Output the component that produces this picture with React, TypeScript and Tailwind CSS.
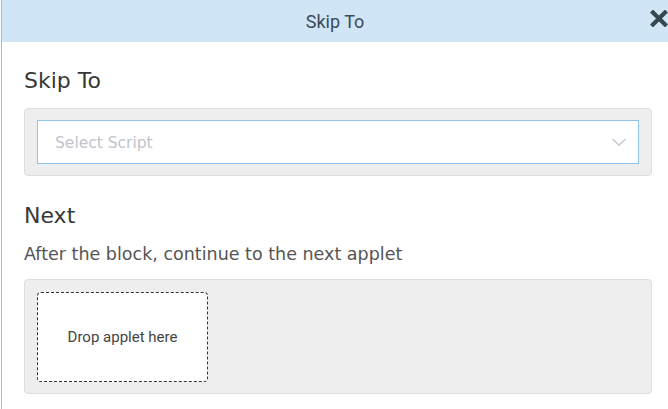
export default function App() {
  return (
    <div className="ml-px h-[409px] w-[667px] overflow-hidden border-l border-[#8ec4ec] bg-white">
      <header className="relative flex h-[42px] items-center justify-center bg-[#d0e6f7]">
        <span className="font-['Roboto',sans-serif] text-[18px] text-[#3c4a55]">Skip To</span>
        <svg
          className="absolute right-0 top-[10px]"
          width="18"
          height="17"
          viewBox="0 0 18 17"
        >
          <path d="M3 2.5 L15 14.5 M15 2.5 L3 14.5" stroke="#37474f" strokeWidth="4.2" strokeLinecap="square" />
        </svg>
      </header>

      <div className="pl-[22px] pr-4 font-['DejaVu_Sans',sans-serif]">
        <h2 className="mt-[25px] text-[22px] leading-[28px] text-[#383838]">Skip To</h2>
        <div className="mt-[13px] rounded-[4px] border border-[#dddddd] bg-[#eeeeee] px-3 py-[11px]">
          <div className="flex h-[44px] items-center justify-between border border-[#8ec4ec] bg-white pl-[17px] pr-[10px]">
            <span className="pt-[3px] text-[15.5px] text-[#c0c4cc]">Select Script</span>
            <svg width="16" height="10" viewBox="0 0 16 10" className="mr-[1px]">
              <polyline points="1.5,2 8,8 14.5,2" fill="none" stroke="#c3c6d0" strokeWidth="1.3" />
            </svg>
          </div>
        </div>

        <h2 className="mt-[26px] text-[22px] leading-[28px] text-[#383838]">Next</h2>
        <p className="mt-[12px] text-[17.5px] leading-[24px] text-[#555555]">
          After the block, continue to the next applet
        </p>
        <div className="mt-[13px] rounded-[4px] border border-[#dddddd] bg-[#eeeeee] px-3 pb-[11px] pt-3">
          <div className="flex h-[90px] w-[171px] items-center justify-center rounded-[4px] border border-dashed border-[#333333] bg-white">
            <span className="font-['Roboto',sans-serif] text-[15px] text-[#444444]">Drop applet here</span>
          </div>
        </div>
      </div>
    </div>
  );
}
